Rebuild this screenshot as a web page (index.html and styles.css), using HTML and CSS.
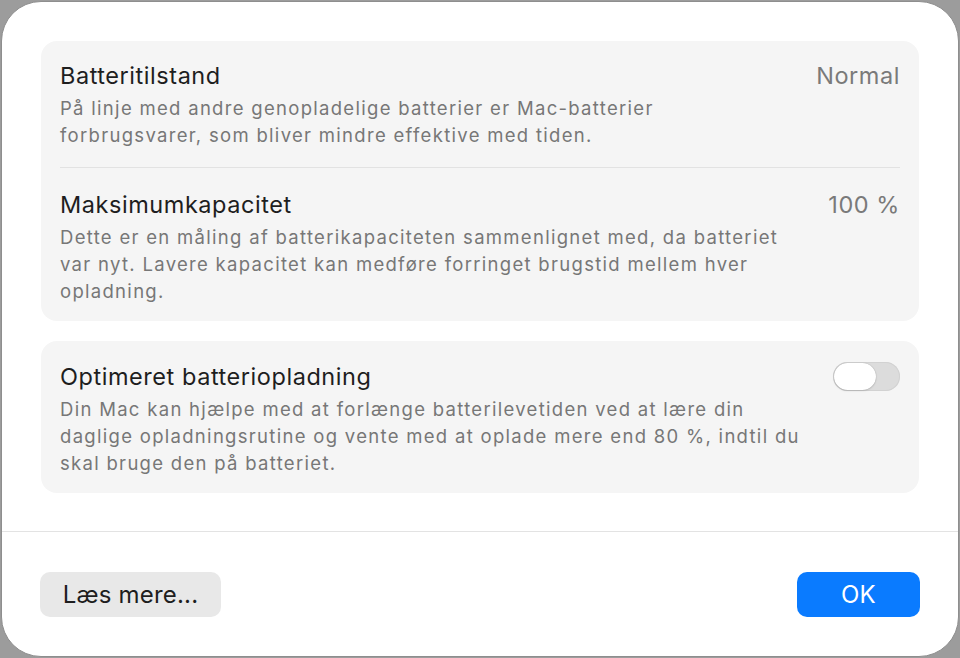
FILE: index.html
```html
<!DOCTYPE html>
<html lang="da">
<head>
<meta charset="utf-8">
<title>Batteritilstand</title>
<link rel="stylesheet" href="styles.css">
</head>
<body>
<div class="dialog">
  <div class="content">
    <section class="group">
      <div class="row row-first">
        <div class="text">
          <div class="title">Batteritilstand</div>
          <div class="desc">På linje med andre genopladelige batterier er Mac-batterier<br>forbrugsvarer, som bliver mindre effektive med tiden.</div>
        </div>
        <div class="value">Normal</div>
      </div>
      <div class="divider"></div>
      <div class="row row-second">
        <div class="text">
          <div class="title">Maksimumkapacitet</div>
          <div class="desc">Dette er en måling af batterikapaciteten sammenlignet med, da batteriet<br>var nyt. Lavere kapacitet kan medføre forringet brugstid mellem hver<br>opladning.</div>
        </div>
        <div class="value">100 %</div>
      </div>
    </section>
    <section class="group">
      <div class="row row-toggle">
        <div class="text">
          <div class="title">Optimeret batteriopladning</div>
          <div class="desc">Din Mac kan hjælpe med at forlænge batterilevetiden ved at lære din<br>daglige opladningsrutine og vente med at oplade mere end 80 %, indtil du<br>skal bruge den på batteriet.</div>
        </div>
        <div class="toggle"><div class="knob"></div></div>
      </div>
    </section>
  </div>
  <div class="footer">
    <button class="btn btn-secondary">Læs mere...</button>
    <button class="btn btn-primary">OK</button>
  </div>
</div>
</body>
</html>
```
FILE: styles.css
```css
* { box-sizing: border-box; }
html, body { margin: 0; padding: 0; }
body {
  width: 960px;
  height: 658px;
  background: #9c9c9c;
  font-family: Inter, "Noto Sans", "Liberation Sans", sans-serif;
  padding: 1px;
}
.dialog {
  width: 958px;
  height: 656px;
  background: #ffffff;
  border: 1px solid #8e8e8e;
  border-radius: 40px;
  display: flex;
  flex-direction: column;
  overflow: hidden;
}
.content {
  padding: 39px 39px 0 39px;
  display: flex;
  flex-direction: column;
  gap: 20px;
  height: 530px;
  border-bottom: 1px solid #e3e3e3;
}
.group {
  background: #f5f5f5;
  border-radius: 16px;
  padding: 0 19px;
}
.row {
  display: flex;
  justify-content: space-between;
  align-items: flex-start;
}
.row-first { padding: 21px 0 18px 0; }
.row-second { padding: 23px 0 16px 0; }
.row-toggle { padding: 22px 0 16px 0; }
.title {
  font-size: 23.5px;
  line-height: 28px;
  color: #1e1e1e;
  letter-spacing: 0.55px;
}
.desc {
  margin-top: 5px;
  font-size: 18.5px;
  line-height: 27px;
  color: #777777;
  letter-spacing: 1.3px;
}
.value {
  font-size: 23.5px;
  line-height: 28px;
  color: #7a7a7a;
  letter-spacing: 0.55px;
}
.divider {
  height: 1px;
  background: #e2e2e2;
}
.toggle {
  width: 67px;
  height: 29px;
  border-radius: 15px;
  background: #dcdcdc;
  padding: 1px;
  margin-top: -1px;
  box-shadow: inset 0 0 0 1px #d2d2d2;
}
.knob {
  width: 42px;
  height: 27px;
  border-radius: 14px;
  background: #ffffff;
  box-shadow: 0 0 1px rgba(0,0,0,0.3), 0 1px 2px rgba(0,0,0,0.12);
}
.footer {
  flex: 1;
  display: flex;
  justify-content: space-between;
  align-items: flex-start;
  padding: 40px 38px 0 38px;
}
.btn {
  font-family: Inter, "Noto Sans", "Liberation Sans", sans-serif;
  font-size: 24px;
  letter-spacing: 0.2px;
  height: 45px;
  border: none;
  border-radius: 10px;
  padding: 0;
  line-height: 45px;
}
.btn-secondary {
  width: 181px;
  background: #e8e8e8;
  color: #1e1e1e;
}
.btn-primary {
  width: 123px;
  background: #0a7bff;
  color: #ffffff;
}
```
